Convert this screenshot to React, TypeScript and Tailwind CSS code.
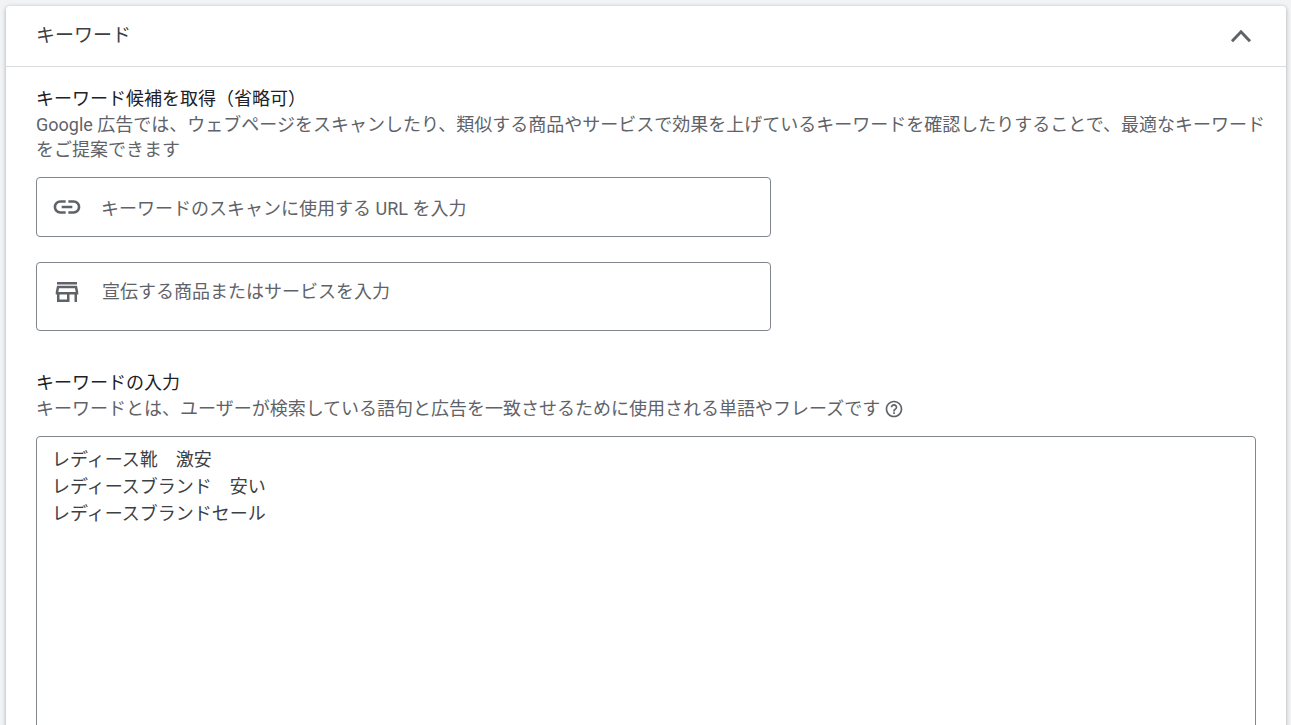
import React, { useState } from 'react';
import { MdHelpOutline, MdLink } from 'react-icons/md';

const DEFAULT_KEYWORDS = ['レディース靴　激安', 'レディースブランド　安い', 'レディースブランドセール'];

const StoreIcon: React.FC = () => (
  <svg viewBox="0 0 24 24" className="h-[30px] w-[30px] shrink-0" fill="currentColor" aria-hidden="true">
    <path d="M18.36 9l.6 3H5.04l.6-3h12.72M20 4H4v2h16V4zm0 3H4l-1 5v2h1v6h10v-6h4v6h2v-6h1v-2l-1-5zM6 18v-4h6v4H6z" />
  </svg>
);

const ChevronUpIcon: React.FC = () => (
  <svg viewBox="0 0 40 40" className="h-10 w-10" fill="none" stroke="currentColor" strokeWidth="3" aria-hidden="true">
    <path d="M11 25.2L20 15.8L29 25.2" />
  </svg>
);

const App: React.FC = () => {
  const [open, setOpen] = useState(true);
  const [keywords, setKeywords] = useState(DEFAULT_KEYWORDS.join('\n'));

  return (
    <div className="h-screen overflow-hidden bg-[#f1f3f4] pt-[6px] pr-[5px] pl-[6px] font-[Roboto,'Noto_Sans_CJK_JP',sans-serif] text-lg text-[#5f6368]">
      <section className="flex min-h-full flex-col rounded-t bg-white shadow-[0_1px_4px_rgba(60,64,67,0.4)]">
        <header className="flex h-[61px] items-center justify-between border-b border-[#dadce0] pr-[25px] pl-[30px]">
          <h2 className="text-[19px] text-[#3c4043]">キーワード</h2>
          <button type="button" aria-label="キーワード" aria-expanded={open} onClick={() => setOpen(!open)}>
            <ChevronUpIcon />
          </button>
        </header>

        {open && (
          <div className="px-[30px] pt-[19px]">
            <h3 className="leading-[26px] text-[#202124]">キーワード候補を取得（省略可）</h3>
            <p className="-mr-3 leading-[25px]">
              Google 広告では、ウェブページをスキャンしたり、類似する商品やサービスで効果を上げているキーワードを確認したりすることで、最適なキーワードをご提案できます
            </p>

            <label className="mt-[15px] flex h-[60px] max-w-[735px] items-center gap-[18px] rounded border border-[#80868b] px-[14px]">
              <MdLink className="h-8 w-8 shrink-0" />
              <input
                type="text"
                aria-label="URL"
                placeholder="キーワードのスキャンに使用する URL を入力"
                className="w-full pt-[3px] outline-none placeholder:text-[#5f6368]"
              />
            </label>

            <label className="mt-[25px] flex h-[69px] max-w-[735px] items-start gap-5 rounded border border-[#80868b] px-[15px] pt-[14px]">
              <StoreIcon />
              <input
                type="text"
                aria-label="商品またはサービス"
                placeholder="宣伝する商品またはサービスを入力"
                className="w-full pt-px outline-none placeholder:text-[#5f6368]"
              />
            </label>

            <h3 className="mt-[39px] leading-[26px] text-[#202124]">
              <label htmlFor="keywords">キーワードの入力</label>
            </h3>
            <p className="flex items-center gap-1 leading-[26px]">
              キーワードとは、ユーザーが検索している語句と広告を一致させるために使用される単語やフレーズです
              <button type="button" aria-label="ヘルプ">
                <MdHelpOutline className="h-5 w-5" />
              </button>
            </p>
            <textarea
              id="keywords"
              rows={14}
              value={keywords}
              onChange={(e) => setKeywords(e.target.value)}
              className="mt-[14px] block w-full resize-none rounded border border-[#80868b] px-[15px] py-[9px] leading-[27px] text-[#3c4043] outline-none"
            />
          </div>
        )}
      </section>
    </div>
  );
};

export default App;
